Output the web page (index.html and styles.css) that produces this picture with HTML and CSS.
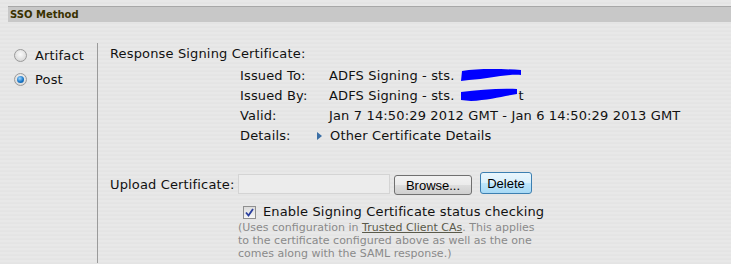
FILE: index.html
```html
<!doctype html>
<html lang="en">
    <head>
        <meta charset="UTF-8" />
        <title>SSO Method</title>
        <link rel="stylesheet" href="styles.css">
    </head>
    <body>
        <div class="section-head">SSO Method</div>
        <div class="method">
            <div class="options">
                <label class="option"><span class="radio"></span>Artifact</label>
                <label class="option"><span class="radio checked"></span>Post</label>
            </div>
            <div class="details">
                <div class="title">Response Signing Certificate:</div>
                <div class="cert">
                    <div class="cert-label">Issued To:</div>
                    <div class="cert-value">ADFS Signing - sts.<svg class="scribble" width="64" height="16" viewBox="0 0 64 16"><path d="M3 4 C20 1 45 2 62 3 L62 8 C45 7 30 12 10 13 L2 14 Z" fill="#0000ff"/></svg></div>
                    <div class="cert-label">Issued By:</div>
                    <div class="cert-value">ADFS Signing - sts.<svg class="scribble" width="60" height="16" viewBox="0 0 60 16"><path d="M2 5 C20 3 40 1 58 2 L58 7 C45 9 30 13 12 14 L2 13 Z" fill="#0000ff"/></svg>t</div>
                    <div class="cert-label">Valid:</div>
                    <div class="cert-value">Jan 7 14:50:29 2012 GMT - Jan 6 14:50:29 2013 GMT</div>
                    <div class="cert-label">Details:</div>
                    <div class="cert-value"><span class="arrow"></span>Other Certificate Details</div>
                </div>
                <div class="upload">
                    <span class="upload-label">Upload Certificate:</span>
                    <span class="file-box"></span>
                    <button class="btn browse">Browse...</button>
                    <button class="btn delete">Delete</button>
                </div>
                <div class="check-row">
                    <span class="checkbox"><svg width="9" height="9" viewBox="0 0 9 9"><path d="M1 4.5 L3.5 7.5 L8 1" fill="none" stroke="#2a3f9e" stroke-width="1.8"/></svg></span>
                    Enable Signing Certificate status checking
                </div>
                <div class="note">(Uses configuration in <a href="#">Trusted Client CAs</a>. This applies to the certificate configured above as well as the one comes along with the SAML response.)</div>
            </div>
        </div>
    </body>
</html>
```

FILE: styles.css
```css
body {
    margin: 0;
    font-family: "DejaVu Sans", Verdana, sans-serif;
    font-size: 13px;
    letter-spacing: 0.15px;
    color: #111;
    background: #e6e6e6;
    background-image: repeating-linear-gradient(to bottom, #e8e8e8 0, #e8e8e8 2px, #e2e2e2 3px, #e6e6e6 4px);
    height: 264px;
    overflow: hidden;
}
.section-head {
    margin: 6px 0 0 8px;
    height: 15px;
    line-height: 15px;
    padding-left: 2px;
    background: #c8c8c8;
    border-top: 1px solid #a8a8a8;
    font-size: 10px;
    font-weight: bold;
    letter-spacing: 0;
    color: #3a3200;
}
.method {
    display: flex;
    margin-top: 21px;
}
.options {
    width: 83px;
    padding: 0 0 0 14px;
}
.option {
    display: flex;
    align-items: center;
    height: 24px;
}
.radio {
    width: 11px;
    height: 11px;
    border: 1px solid #9a9a9a;
    border-radius: 50%;
    background: radial-gradient(circle at 50% 40%, #fafafa 0, #dcdcdc 70%, #c8c8c8 100%);
    margin-right: 8px;
    position: relative;
}
.radio.checked::after {
    content: "";
    position: absolute;
    left: 2px;
    top: 2px;
    width: 7px;
    height: 7px;
    border-radius: 50%;
    background: radial-gradient(circle at 40% 35%, #9fd6ff 0, #1a78c8 55%, #0c4f8f 100%);
}
.details {
    flex: 1;
    border-left: 1px solid #9a9a9a;
    padding-left: 12px;
    height: 220px;
}
.title {
    line-height: 20px;
    margin-top: 1px;
}
.cert {
    display: grid;
    grid-template-columns: 89px auto;
    margin: 2px 0 0 130px;
    line-height: 20px;
}
.scribble {
    vertical-align: -3px;
    margin-left: 4px;
}
.arrow {
    display: inline-block;
    width: 0;
    height: 0;
    border-left: 5px solid #3a6ea5;
    border-top: 4px solid transparent;
    border-bottom: 4px solid transparent;
    margin: 0 8px 0 -12px;
}
.upload {
    display: flex;
    align-items: center;
    margin-top: 27px;
}
.upload-label {
    width: 128px;
}
.file-box {
    width: 150px;
    height: 18px;
    background: #ececec;
    border: 1px solid #d4d4d4;
}
.btn {
    font-family: "Liberation Sans", Arial, sans-serif;
    font-size: 13px;
    letter-spacing: 0;
    color: #000;
    border-radius: 3px;
    padding: 0;
}
.browse {
    width: 78px;
    height: 20px;
    margin: 2px 0 0 4px;
    border: 1px solid #707070;
    background: linear-gradient(to bottom, #f2f2f2 0, #ebebeb 50%, #dddddd 51%, #cfcfcf 100%);
}
.delete {
    width: 52px;
    height: 22px;
    margin: -2px 0 0 8px;
    border: 1px solid #3c7fb1;
    background: linear-gradient(to bottom, #eaf6fd 0, #d9f0fc 50%, #bee6fd 51%, #a7d9f5 100%);
}
.check-row {
    display: flex;
    align-items: center;
    margin: 8px 0 0 133px;
    line-height: 18px;
}
.checkbox {
    width: 11px;
    height: 11px;
    border: 1px solid #8f8f8f;
    background: linear-gradient(to bottom, #dcdcdc, #f6f6f6);
    margin-right: 7px;
    display: flex;
    align-items: center;
    justify-content: center;
}
.note {
    margin-left: 128px;
    width: 308px;
    font-size: 11px;
    letter-spacing: 0;
    line-height: 13px;
    color: #8a8a8a;
}
.note a {
    color: #5a5a4a;
}
```
